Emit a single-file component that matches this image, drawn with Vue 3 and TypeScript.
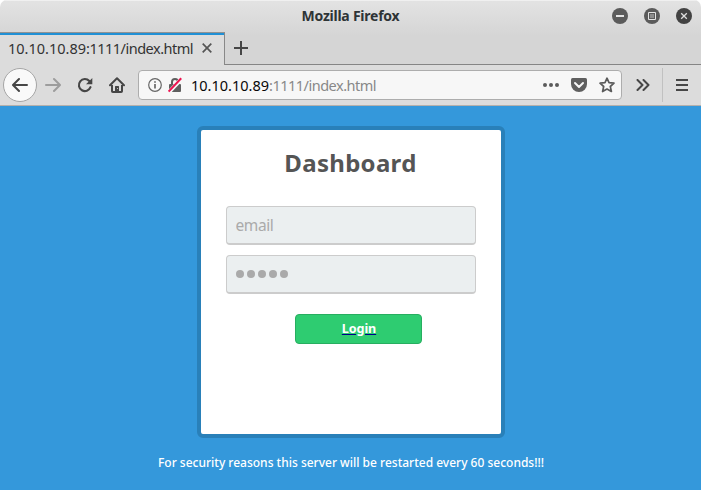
<script setup lang="ts">
import { ref } from 'vue'

const host = ref<string>('10.10.10.89')
const path = ref<string>(':1111/index.html')
const email = ref<string>('')
const dots: number = 5
</script>

<template>
  <div class="window">
    <header class="titlebar">
      <span class="title">Mozilla Firefox</span>
      <div class="controls">
        <svg width="16" height="16" viewBox="0 0 16 16"><circle cx="8" cy="8" r="8" fill="#5b5b5b" /><path d="M4 8h8" stroke="#e4e4e4" stroke-width="2" /></svg>
        <svg width="16" height="16" viewBox="0 0 16 16"><circle cx="8" cy="8" r="8" fill="#5b5b5b" /><path d="M4.5 4.5h7v7h-7z" fill="none" stroke="#e4e4e4" /><path d="M6 6h4v4H6z" fill="#8c8c8c" /></svg>
        <svg width="16" height="16" viewBox="0 0 16 16"><circle cx="8" cy="8" r="8" fill="#424242" /><path d="M5.2 5.2l5.6 5.6M10.8 5.2l-5.6 5.6" stroke="#dedede" stroke-width="1.3" /></svg>
      </div>
    </header>

    <div class="tabs">
      <div class="tab">
        <span class="tab-text"><span class="tab-host">{{ host }}</span>{{ path }}</span>
        <svg class="tab-close" width="10" height="10" viewBox="0 0 10 10"><path d="M.7.7l8.6 8.6M9.3.7L.7 9.3" stroke="#555" stroke-width="1.7" /></svg>
      </div>
      <div class="tab-rest">
        <svg width="14" height="14" viewBox="0 0 14 14"><path d="M0 7h14M7 0v14" stroke="#464646" stroke-width="2" /></svg>
      </div>
    </div>

    <nav class="toolbar">
      <button class="back" type="button" aria-label="Back">
        <svg width="16" height="16" viewBox="0 0 16 16" fill="none" stroke="#464646" stroke-width="2" stroke-linecap="round" stroke-linejoin="round"><path d="M15 8H1.5M7 2L1 8l6 6" /></svg>
      </button>
      <svg class="forward" width="16" height="16" viewBox="0 0 16 16" fill="none" stroke="#9d9d9d" stroke-width="2" stroke-linecap="round" stroke-linejoin="round"><path d="M1 8h13.5M9 2l6 6-6 6" /></svg>
      <svg class="reload" width="16" height="16" viewBox="0 0 16 16"><path d="M13.5 10.2A6 6 0 1 1 12.3 4" fill="none" stroke="#464646" stroke-width="2.1" stroke-linecap="round" /><path d="M15.3 1v6.3H9z" fill="#464646" /></svg>
      <svg class="home" width="16" height="16" viewBox="0 0 16 16"><path d="M1 8.3L8 1.3l7 7" fill="none" stroke="#464646" stroke-width="2" stroke-linecap="round" stroke-linejoin="round" /><path d="M3 8v6.2q0 .8.8.8h8.4q.8 0 .8-.8V8" fill="none" stroke="#464646" stroke-width="2" /><path d="M6 15V9.6q0-.6.6-.6h2.8q.6 0 .6.6V15z" fill="#464646" /><path d="M8 11h1v1H8z" fill="#bbb" /></svg>

      <div class="urlbar">
        <svg class="info" width="14" height="14" viewBox="0 0 14 14"><circle cx="7" cy="7" r="6.3" fill="none" stroke="#666" stroke-width="1.2" /><path d="M7 6v4.5M7 3.2v1.6" stroke="#666" stroke-width="1.7" /></svg>
        <svg class="lock" width="14" height="16" viewBox="0 0 14 16"><path d="M4 8V5a3 3 0 0 1 6 0v3" fill="none" stroke="#5f5f5f" stroke-width="2" /><rect x="1" y="7" width="12" height="8" rx="1" fill="#5f5f5f" /><path d="M.8 15.2L14 1.4" stroke="#f7f7f7" stroke-width="4" /><path d="M.6 14.6L13.2 1.3" stroke="#ed1450" stroke-width="2" /></svg>
        <span class="url"><span class="url-host">{{ host }}</span>{{ path }}</span>
        <svg class="more" width="16" height="4" viewBox="0 0 16 4" fill="#5b5b5b"><circle cx="2" cy="2" r="2" /><circle cx="8" cy="2" r="2" /><circle cx="14" cy="2" r="2" /></svg>
        <svg class="pocket" width="16" height="14" viewBox="0 0 16 14"><path d="M1.5 0h13Q16 0 16 1.5V6a8 8 0 0 1-16 0V1.5Q0 0 1.5 0z" fill="#5f5f5f" /><path d="M4 5l4 4 4-4" fill="none" stroke="#f7f7f7" stroke-width="2" stroke-linecap="round" stroke-linejoin="round" /></svg>
        <svg class="star" width="16" height="16" viewBox="0 0 16 16"><path d="M8 1.2l2 4.5 5 .5-3.7 3.3 1.1 5L8 12l-4.4 2.5 1.1-5L1 6.2l5-.5z" fill="none" stroke="#5b5b5b" stroke-width="1.7" stroke-linejoin="round" /></svg>
      </div>

      <svg class="overflow" width="14" height="12" viewBox="0 0 14 12" fill="none" stroke="#464646" stroke-width="2" stroke-linecap="round" stroke-linejoin="round"><path d="M1.5 1l5 5-5 5M7.5 1l5 5-5 5" /></svg>
      <span class="divider"></span>
      <svg class="menu" width="12" height="12" viewBox="0 0 12 12"><path d="M0 1h12M0 6h12M0 11h12" stroke="#464646" stroke-width="2" /></svg>
    </nav>

    <main class="page">
      <form class="card" @submit.prevent>
        <h1>Dashboard</h1>
        <input v-model="email" class="field" type="text" placeholder="email">
        <div class="field password">
          <i v-for="n in dots" :key="n"></i>
        </div>
        <a class="login"><span>Login</span></a>
      </form>
      <p class="notice">For security reasons this server will be restarted every 60 seconds!!!</p>
    </main>
  </div>
</template>

<style>
body {
  margin: 0;
  background: #fff;
}
</style>

<style scoped>
.window {
  box-sizing: border-box;
  display: flex;
  flex-direction: column;
  width: 701px;
  height: 490px;
  overflow: hidden;
  border-radius: 7px 7px 0 0;
  background: linear-gradient(#e3e3e3, #d5d5d5 36px);
  font-family: "Noto Sans", "Open Sans", sans-serif;
}
svg {
  display: block;
  flex: none;
}
.titlebar {
  display: grid;
  grid-template-columns: 1fr auto 1fr;
  align-items: center;
  height: 32px;
  box-shadow: inset 0 1px #f0f0f0;
}
.title {
  grid-column: 2;
  color: #2e3436;
  font-size: 14px;
  font-weight: 700;
  line-height: 32px;
  letter-spacing: -0.24px;
}
.controls {
  display: flex;
  justify-content: flex-end;
  gap: 16px;
  padding-right: 9px;
}
.tabs {
  display: flex;
  height: 33px;
}
.tab {
  box-sizing: border-box;
  display: flex;
  align-items: center;
  width: 225px;
  padding: 0 0 2px 8px;
  border-top: 1px solid #929292;
  border-right: 1px solid #888;
  background: #dcdcdc;
  box-shadow: inset 0 2px #2090d5;
}
.tab-text {
  width: 194px;
  color: #333;
  font-size: 14.5px;
  line-height: 28px;
  letter-spacing: -0.5px;
  white-space: nowrap;
}
.tab-host {
  letter-spacing: 0;
}
.tab-rest {
  display: flex;
  flex: 1;
  align-items: center;
  padding-left: 9px;
  border-bottom: 1px solid #858585;
}
.toolbar {
  box-sizing: border-box;
  display: flex;
  align-items: center;
  height: 41px;
  padding: 0 13px 0 3px;
  border-bottom: 1px solid #b5b0ac;
  background: #dcdcdc;
}
.back {
  box-sizing: border-box;
  display: grid;
  place-items: center;
  width: 34px;
  height: 34px;
  padding: 0;
  border: 1px solid #a5a5a5;
  border-radius: 50%;
  background: #f9f9f9;
}
.forward {
  margin-left: 8px;
}
.reload,
.home {
  margin-left: 16px;
}
.urlbar {
  box-sizing: border-box;
  display: flex;
  align-items: center;
  width: 484px;
  height: 30px;
  margin-left: 13px;
  padding: 0 6px 0 9px;
  border: 1px solid #adadad;
  border-radius: 4px;
  background: #f7f7f7;
}
.lock {
  margin-left: 6px;
}
.url {
  flex: 1;
  margin-left: 9px;
  color: #888;
  font-size: 14.5px;
  line-height: 28px;
  letter-spacing: -0.5px;
  white-space: nowrap;
}
.url-host {
  color: #080808;
  letter-spacing: 0;
}
.pocket,
.star {
  margin-left: 12px;
}
.overflow {
  margin-left: 14px;
}
.divider {
  width: 1px;
  height: 34px;
  margin: 0 13px 0 12px;
  background: #c1c1c1;
}
.page {
  display: flex;
  flex: 1;
  flex-direction: column;
  align-items: center;
  padding-top: 20px;
  background: #3498db;
}
.card {
  box-sizing: border-box;
  display: flex;
  flex-direction: column;
  width: 308px;
  height: 312px;
  padding: 0 25px;
  border: 4px solid #2980b9;
  border-radius: 6px;
  background: #fff;
}
h1 {
  margin: 15px 0 25px;
  color: #555;
  font-family: "Noto Sans", sans-serif;
  font-size: 24px;
  font-weight: 700;
  line-height: 36px;
  letter-spacing: 0.3px;
  text-align: center;
}
.field {
  box-sizing: border-box;
  width: 250px;
  height: 39px;
  margin: 0 0 10px;
  padding: 0 8px 0 9px;
  border: 1px solid #ccc;
  border-bottom-width: 2px;
  border-radius: 4px;
  outline: none;
  background: #ebeff0;
  color: #aaa;
  font-family: "Noto Sans", sans-serif;
  font-size: 15.5px;
  letter-spacing: -0.4px;
}
.field::placeholder {
  color: #aaa;
  opacity: 1;
}
.password {
  display: flex;
  align-items: center;
  gap: 3px;
}
.password i {
  width: 8px;
  height: 8px;
  border-radius: 50%;
  background: #aaa;
}
.login {
  box-sizing: border-box;
  width: 127px;
  height: 30px;
  margin: 10px 0 0 69px;
  padding-left: 2px;
  border: 1px solid #27ae60;
  border-radius: 4px;
  background: #2ecc71;
  color: #00008b;
  font-family: "Noto Sans", sans-serif;
  font-size: 12.6px;
  font-weight: 700;
  line-height: 28px;
  letter-spacing: -0.1px;
  text-align: center;
  text-decoration: underline;
}
.login span {
  color: #fff;
}
.notice {
  margin: 16px 0 0 1px;
  color: #fff;
  font-family: "Noto Sans", sans-serif;
  font-size: 12px;
  font-weight: 500;
  line-height: 17px;
  white-space: nowrap;
}
</style>
